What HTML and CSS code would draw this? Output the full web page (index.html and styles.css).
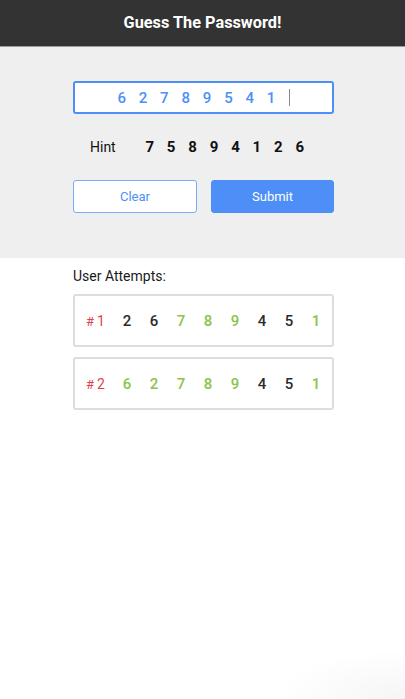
FILE: index.html
```html
<!DOCTYPE html>
<html>
<head>
<meta charset="utf-8">
<link rel="stylesheet" href="styles.css">
</head>
<body>
<header class="topbar">Guess The Password!</header>
<section class="panel">
  <div class="guess-input">
    <span class="slot">6</span><span class="slot">2</span><span class="slot">7</span><span class="slot">8</span><span class="slot">9</span><span class="slot">5</span><span class="slot">4</span><span class="slot">1</span><span class="caret"></span>
  </div>
  <div class="hint">
    <span class="hint-label">Hint</span>
    <span class="slot">7</span><span class="slot">5</span><span class="slot">8</span><span class="slot">9</span><span class="slot">4</span><span class="slot">1</span><span class="slot">2</span><span class="slot">6</span>
  </div>
  <div class="actions">
    <button class="btn btn-clear">Clear</button>
    <button class="btn btn-submit">Submit</button>
  </div>
</section>
<section class="attempts">
  <div class="attempts-title">User Attempts:</div>
  <div class="attempt">
    <span class="num">#<span class="num-n">1</span></span>
    <span class="d">2</span><span class="d">6</span><span class="d ok">7</span><span class="d ok">8</span><span class="d ok">9</span><span class="d">4</span><span class="d">5</span><span class="d ok">1</span>
  </div>
  <div class="attempt">
    <span class="num">#<span class="num-n">2</span></span>
    <span class="d ok">6</span><span class="d ok">2</span><span class="d ok">7</span><span class="d ok">8</span><span class="d ok">9</span><span class="d">4</span><span class="d">5</span><span class="d ok">1</span>
  </div>
</section>
</body>
</html>
```

FILE: styles.css
```css
* { box-sizing: border-box; }
html, body { margin: 0; padding: 0; }
body {
  font-family: Roboto, "Liberation Sans", sans-serif;
  background: #fff;
  min-height: 699px;
  background-image: radial-gradient(ellipse 130px 50px at 100% 100%, rgba(0,0,0,0.04), rgba(0,0,0,0) 100%);
  background-repeat: no-repeat;
}
.topbar {
  height: 47px;
  background: #333333;
  border-bottom: 1px solid #9a9a9a;
  color: #fff;
  font-weight: 700;
  font-size: 16.3px;
  display: flex;
  align-items: center;
  justify-content: center;
  padding-bottom: 2px;
}
.panel {
  background: #efefef;
  height: 211px;
  padding: 34px 71px 0 73px;
}
.guess-input {
  height: 33px;
  background: #fff;
  border: 2px solid #4d8ff6;
  border-radius: 3px;
  display: flex;
  align-items: center;
  padding-left: 36px;
  color: #4d8ff6;
  font-weight: 500;
  font-size: 15px;
}
.slot {
  width: 21.35px;
  text-align: center;
  flex: none;
}
.caret {
  width: 1px;
  height: 17px;
  background: #8a8a8a;
  margin-left: 7px;
}
.hint {
  display: flex;
  align-items: center;
  height: 32px;
  margin-top: 17px;
  padding-left: 17px;
  font-size: 15px;
  font-weight: 700;
  color: #111;
}
.hint-label {
  width: 49px;
  font-weight: 400;
  font-size: 14px;
}
.hint .slot { width: 21.45px; }
.actions {
  display: flex;
  gap: 14px;
  margin-top: 17px;
}
.btn {
  height: 33px;
  font-family: inherit;
  font-size: 13px;
  border-radius: 3px;
  padding: 0;
}
.btn-clear {
  width: 124px;
  background: #fff;
  border: 1px solid #7aabf7;
  color: #4d8ff6;
}
.btn-submit {
  flex: 1;
  background: #4d8ff6;
  border: 1px solid #4d8ff6;
  color: #fff;
}
.attempts {
  padding: 10px 71px 0 73px;
}
.attempts-title {
  font-size: 14px;
  color: #1a1a1a;
  height: 26px;
}
.attempt {
  height: 53px;
  border: 2px solid #dcdce1;
  border-radius: 3px;
  display: flex;
  align-items: center;
  padding-left: 11px;
  margin-bottom: 10px;
  font-size: 15px;
  font-weight: 500;
  color: #2b2b2b;
}
.num {
  width: 27.5px;
  color: #d9444f;
  font-size: 13px;
  font-weight: 400;
}
.num-n {
  font-size: 14px;
  margin-left: 3px;
}
.d {
  width: 27px;
  text-align: center;
  flex: none;
}
.d.ok { color: #8bc34a; }
```
